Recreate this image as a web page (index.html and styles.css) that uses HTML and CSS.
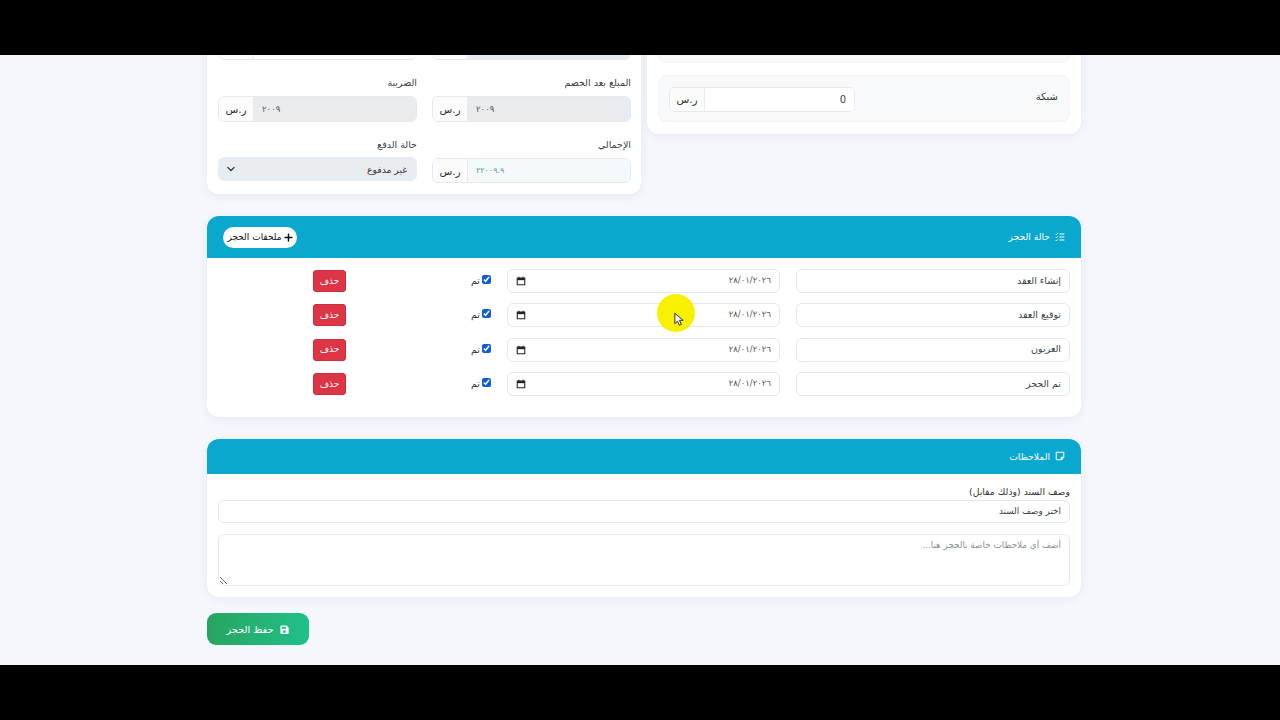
FILE: index.html
```html
<!DOCTYPE html>
<html lang="ar" dir="rtl">
<head>
<meta charset="utf-8">
<title>حجز</title>
<link rel="stylesheet" href="styles.css">
</head>
<body>
<div class="bar"></div>
<main class="screen">
  <div class="page">
    <div class="top-row">
      <section class="card pays">
        <div class="pay"></div>
        <div class="pay">
          <span class="pay-name">شبكة</span>
          <div class="group pay-group"><input class="cash" value="0"><span class="unit">ر.س</span></div>
        </div>
      </section>
      <section class="card fields">
        <div class="field">
          <div class="label-gap"></div>
          <div class="group"><span class="unit"></span><input class="num muted"></div>
        </div>
        <div class="field">
          <div class="label-gap"></div>
          <div class="group"><span class="unit"></span><input class="num"></div>
        </div>
        <div class="field">
          <label>المبلغ بعد الخصم</label>
          <div class="group"><span class="unit">ر.س</span><input class="num muted" value="٢٠٠٩"></div>
        </div>
        <div class="field">
          <label>الضريبة</label>
          <div class="group"><span class="unit">ر.س</span><input class="num muted" value="٢٠٠٩"></div>
        </div>
        <div class="field">
          <label>الإجمالي</label>
          <div class="group total"><span class="unit">ر.س</span><input class="num tint" value="٢٢٠٠٩.٩"></div>
        </div>
        <div class="field">
          <label>حالة الدفع</label>
          <div class="select">
            <span>غير مدفوع</span>
            <svg class="chev" viewBox="0 0 16 16"><path d="M3 5.500l5 5 5-5" fill="none" stroke="#343a40" stroke-width="2" stroke-linecap="round" stroke-linejoin="round"/></svg>
          </div>
        </div>
      </section>
    </div>

    <section class="card status">
      <header class="head head-tall">
        <h2>
          <svg class="ico" viewBox="0 0 16 16"><path d="M1 3l1.200 1.200L4.400 2M1 8l1.200 1.200L4.400 7M1 13l1.200 1.200L4.400 12M7 3.200h8M7 8h8M7 12.800h8" fill="none" stroke="#fff" stroke-width="1.600"/></svg>
          حالة الحجز
        </h2>
        <button class="pill" type="button">
          <svg class="plus" viewBox="0 0 12 12"><path d="M6 1.500v9M1.500 6h9" stroke="#111" stroke-width="2" stroke-linecap="round"/></svg>
          ملحقات الحجز
        </button>
      </header>
      <div class="rows">
        <div class="row">
          <input class="box" value="إنشاء العقد">
          <div class="box date"><span>٢٨/٠١/٢٠٢٦</span><svg class="cal" viewBox="0 0 12 12"><path d="M1.500 2.500h9v8h-9zM3.500 1v2M8.500 1v2" fill="none" stroke="#222" stroke-width="1.300"/><path d="M1.500 2.500h9v2.500h-9z" fill="#222"/></svg></div>
          <label class="done"><input type="checkbox" checked>تم</label>
          <div class="del-cell"><button class="del" type="button">حذف</button></div>
        </div>
        <div class="row">
          <input class="box" value="توقيع العقد">
          <div class="box date"><span>٢٨/٠١/٢٠٢٦</span><svg class="cal" viewBox="0 0 12 12"><path d="M1.500 2.500h9v8h-9zM3.500 1v2M8.500 1v2" fill="none" stroke="#222" stroke-width="1.300"/><path d="M1.500 2.500h9v2.500h-9z" fill="#222"/></svg></div>
          <label class="done"><input type="checkbox" checked>تم</label>
          <div class="del-cell"><button class="del" type="button">حذف</button></div>
        </div>
        <div class="row">
          <input class="box" value="العربون">
          <div class="box date"><span>٢٨/٠١/٢٠٢٦</span><svg class="cal" viewBox="0 0 12 12"><path d="M1.500 2.500h9v8h-9zM3.500 1v2M8.500 1v2" fill="none" stroke="#222" stroke-width="1.300"/><path d="M1.500 2.500h9v2.500h-9z" fill="#222"/></svg></div>
          <label class="done"><input type="checkbox" checked>تم</label>
          <div class="del-cell"><button class="del" type="button">حذف</button></div>
        </div>
        <div class="row">
          <input class="box" value="تم الحجز">
          <div class="box date"><span>٢٨/٠١/٢٠٢٦</span><svg class="cal" viewBox="0 0 12 12"><path d="M1.500 2.500h9v8h-9zM3.500 1v2M8.500 1v2" fill="none" stroke="#222" stroke-width="1.300"/><path d="M1.500 2.500h9v2.500h-9z" fill="#222"/></svg></div>
          <label class="done"><input type="checkbox" checked>تم</label>
          <div class="del-cell"><button class="del" type="button">حذف</button></div>
        </div>
      </div>
    </section>

    <section class="card notes">
      <header class="head head-short">
        <h2>
          <svg class="ico" viewBox="0 0 16 16"><path d="M2 2h12v8l-4 4H3.500A1.500 1.500 0 0 1 2 12.500z M10 14v-4h4" fill="none" stroke="#fff" stroke-width="1.700" stroke-linejoin="round"/></svg>
          الملاحظات
        </h2>
      </header>
      <div class="notes-body">
        <label class="doc-label">وصف السند (وذلك مقابل)</label>
        <input class="box slim" value="اختر وصف السند">
        <textarea class="area" placeholder="أضف أي ملاحظات خاصة بالحجز هنا..."></textarea>
      </div>
    </section>

    <button class="save" type="button">
      <svg class="disk" viewBox="0 0 16 16"><path fill-rule="evenodd" d="M3 2h8l3 3v8a1.500 1.500 0 0 1-1.500 1.500h-9A1.500 1.500 0 0 1 2 13V3.500A1.500 1.500 0 0 1 3 2zm1 2v3h6V4zm4 5.200a2 2 0 1 0 0 4 2 2 0 0 0 0-4z" fill="#fff"/></svg>
      حفظ الحجز
    </button>
  </div>
  <div class="spot"></div>
  <svg class="pointer" viewBox="0 0 12 17"><path d="M1 1v12.500l3.200-3 2.200 5 2.400-1.100-2.200-4.900h4.400z" fill="#f4f4f4" stroke="#333" stroke-width="1.200" stroke-linejoin="round"/></svg>
</main>
<div class="bar"></div>
</body>
</html>
```
FILE: styles.css
```css
* { box-sizing: border-box; }
html, body { height: 100%; }
body {
  margin: 0;
  background: #000;
  display: flex;
  flex-direction: column;
  overflow: hidden;
  font-family: "DejaVu Sans", "Noto Sans", sans-serif;
  font-size: 9.500px;
  color: #2b3036;
}
.bar { height: 55px; flex: none; background: #000; }
.screen {
  position: relative;
  height: 610px;
  flex: none;
  overflow: hidden;
  background: #f5f7fd;
}
.page {
  width: 874px;
  margin: -60px 199px 0 auto;
}
.card {
  background: #fff;
  border-radius: 12px;
  box-shadow: 0 2px 10px rgba(40, 50, 90, .07);
}
.top-row {
  display: flex;
  gap: 6px;
  align-items: flex-start;
  margin-bottom: 22px;
}
.pays {
  width: 434px;
  padding: 21px 11px 12px;
  display: flex;
  flex-direction: column;
  gap: 12px;
}
.fields {
  width: 434px;
  padding: 19px 10px 11px 11px;
  display: grid;
  grid-template-columns: 199px 199px;
  justify-content: space-between;
  row-gap: 16px;
  align-items: start;
}
.field { display: flex; flex-direction: column; gap: 4px; }
.field label { height: 16px; line-height: 14px; color: #3a3f44; }
.label-gap { height: 16px; }
.group {
  display: flex;
  direction: ltr;
  height: 26px;
  border: 1px solid #e6e9ec;
  border-radius: 6px;
  overflow: hidden;
  background: #fff;
}
.unit {
  width: 35px;
  flex: none;
  display: flex;
  align-items: center;
  justify-content: center;
  background: #fbfbfc;
  border-right: 1px solid #e8eaed;
  font-size: 10.500px;
  color: #333;
}
.group input {
  flex: 1;
  min-width: 0;
  border: 0;
  outline: 0;
  padding: 0 8px;
  font: inherit;
  font-size: 8.500px;
  color: #555;
  background: #fff;
}
.group input.muted { background: #e9ecef; }
.group input.tint { background: #f4f9fb; color: #5c9a8e; font-size: 8px; }
.group input.cash { order: 2; text-align: right; font-size: 10px; color: #444; }
.pay-group .unit { order: 1; }
.total { height: 25px; }
.select {
  height: 24px;
  margin-top: -1px;
  border-radius: 6px;
  background: #e9ecef;
  display: flex;
  align-items: center;
  justify-content: space-between;
  padding: 0 10px 0 8px;
  font-size: 9.200px;
  color: #333;
}
.chev { width: 10px; height: 10px; }
.pay {
  height: 47px;
  padding: 1px 11px 0 10px;
  border-radius: 8px;
  background: #f8f9fa;
  border: 1px solid #f3f4f6;
  display: flex;
  align-items: center;
  justify-content: space-between;
}
.pay-name { font-size: 10px; color: #333; margin-top: -5px; }
.pay-group { width: 186px; height: 25px; }

.status { margin-bottom: 22px; padding-bottom: 21px; overflow: hidden; }
.notes { margin-bottom: 16px; overflow: hidden; }
.head {
  display: flex;
  align-items: center;
  justify-content: space-between;
  padding: 0 16px;
  background: #0aa8cf;
  color: #fff;
}
.head h2 {
  margin: 0 0 1px;
  display: flex;
  align-items: center;
  gap: 5px;
  font-size: 9.200px;
  font-weight: 400;
}
.head-tall { height: 42px; }
.head-short { height: 35px; }
.ico { width: 10px; height: 10px; }
.pill {
  height: 21px;
  width: 74px;
  border: 0;
  border-radius: 11px;
  background: #fff;
  color: #111;
  font: inherit;
  font-size: 9px;
  padding: 0;
  display: flex;
  align-items: center;
  justify-content: center;
  gap: 2px;
}
.plus { width: 9px; height: 9px; }
.rows {
  padding: 11px 11px 0;
  display: flex;
  flex-direction: column;
  gap: 10.400px;
}
.row {
  display: grid;
  grid-template-columns: 274px 273px 129px 1fr;
  column-gap: 16px;
  align-items: center;
}
.box {
  display: block;
  width: 100%;
  height: 24px;
  border: 1px solid #e6e8eb;
  border-radius: 6px;
  outline: 0;
  padding: 0 8px 2px;
  background: #fff;
  font: inherit;
  color: #3a3f44;
}
.box.slim { font-size: 8.800px; height: 23px; }
.date {
  display: flex;
  align-items: center;
  justify-content: space-between;
  font-size: 8.500px;
  color: #555;
}
.cal { width: 10px; height: 10px; margin: 2px 1px 0 0; }
.done {
  display: flex;
  align-items: center;
  gap: 2px;
  color: #333;
  margin-top: -1px;
}
.done input {
  margin: 0 0 2px;
  width: 9px;
  height: 9px;
  accent-color: #0b5ed7;
}
.del-cell { display: flex; }
.del {
  width: 33px;
  height: 22px;
  border: 1px solid #c92f41;
  border-radius: 3px;
  background: #dc3545;
  color: #fff;
  font: inherit;
  font-size: 9px;
  padding: 0 0 1px;
}
.notes-body {
  padding: 11px;
  display: flex;
  flex-direction: column;
}
.doc-label { height: 15px; line-height: 14px; color: #333; font-size: 9.300px; }
.area {
  display: block;
  width: 100%;
  height: 52px;
  margin-top: 11px;
  padding: 5px 8px;
  border: 1px solid #e6e8eb;
  border-radius: 6px;
  outline: 0;
  font: inherit;
  font-size: 8.800px;
}
.area::placeholder { color: #8a8f96; }
.save {
  width: 102px;
  height: 32px;
  margin: 0 auto 0 0;
  display: flex;
  align-items: center;
  justify-content: center;
  gap: 5px;
  border: 0;
  border-radius: 9px;
  background: linear-gradient(90deg, #28a55f, #20c08a);
  color: #fff;
  font: inherit;
  font-size: 9.800px;
  padding: 0;
}
.disk { width: 11px; height: 11px; }
.spot {
  position: absolute;
  left: 657px;
  top: 239px;
  width: 38px;
  height: 38px;
  border-radius: 50%;
  background: #f9f000;
}
.pointer {
  position: absolute;
  left: 674px;
  top: 257px;
  width: 10px;
  height: 15px;
}
```
